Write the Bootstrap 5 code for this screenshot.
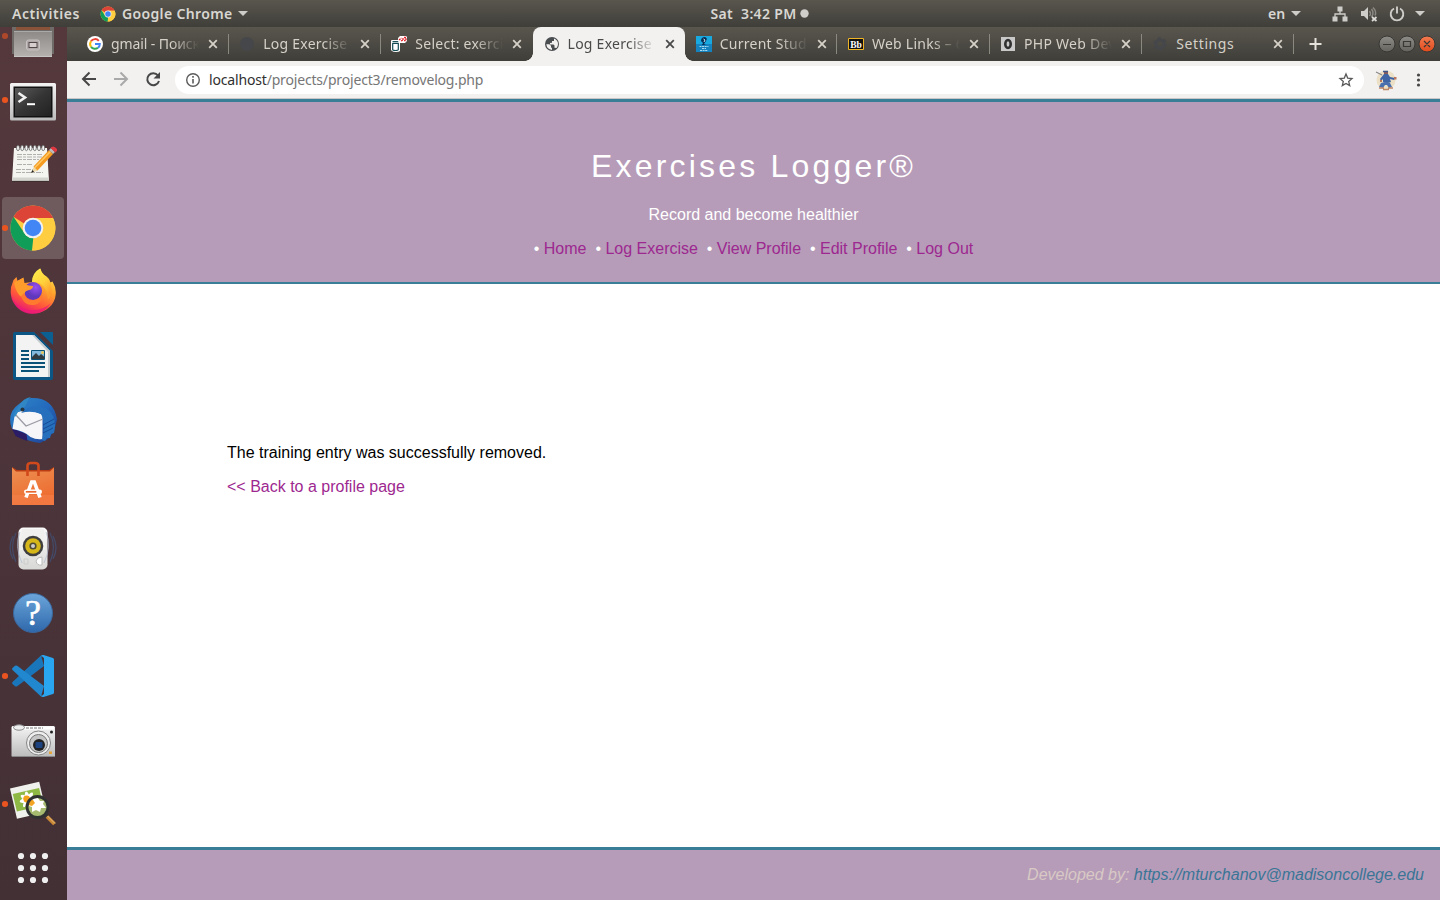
<!DOCTYPE html>
<html lang="en">
<head>
<meta charset="utf-8">
<title>Log Exercise</title>
<link href="https://cdn.jsdelivr.net/npm/bootstrap@5.3.0/dist/css/bootstrap.min.css" rel="stylesheet">
<style>
body{width:1440px;height:900px;overflow:hidden;font-family:"Noto Sans","Open Sans",sans-serif;background:#fff}
svg{display:block;flex:none}
.topbar{height:27px;background:linear-gradient(#59564e,#3f3e39);color:#d9d7d2;font-size:14px;font-weight:600;line-height:27px;white-space:nowrap}
.topbar-side{flex:1 1 0}
.clock{width:98px;margin-left:79px;letter-spacing:.34px;white-space:pre}
.caret{width:0;height:0;border:5px solid transparent;border-top-color:#cfcdc9;border-bottom:0}
.dock{width:67px;background:linear-gradient(#54383c,#4b343a 55%,#423035)}
.dock-list{margin-top:-23px}
.dock-item{height:64px;position:relative}
.dock-item.running::before{content:"";position:absolute;left:2px;top:29px;width:5.5px;height:5.5px;border-radius:50%;background:#e95420}
.dock-item.faded::before{opacity:.6}
.dock-tile{width:62px;height:62px;border-radius:4px;margin-left:-1px}
.dock-item.selected .dock-tile{background:#6f5a5e}
.tabstrip{height:34px;background:linear-gradient(#59564e,#3f3e39);padding-left:9.4px;color:#d6d1c8}
.tab{width:152.2px;padding:0 10.4px 0 10.6px;font-size:14px;letter-spacing:.25px;position:relative}
.tab.sep::after{content:"";position:absolute;right:0;top:7px;height:20px;width:1px;background:#8b8880}
.tab-title{width:88px;overflow:hidden;white-space:nowrap;line-height:34px;height:34px;-webkit-mask-image:linear-gradient(90deg,#000 68%,transparent);mask-image:linear-gradient(90deg,#000 68%,transparent)}
.tab-title.full{-webkit-mask-image:none;mask-image:none}
.tab-title.tight{letter-spacing:-.1px}
.tab-close{margin-left:9px}
.tab.current{background:#f2f1f0;color:#4a4a4a;border-radius:8px 8px 0 0}
.tab.current::before,.tab.current::after{content:"";position:absolute;bottom:0;width:8px;height:8px}
.tab.current::before{left:-8px;background:radial-gradient(circle at 0 0,transparent 7.5px,#f2f1f0 8px)}
.tab.current::after{right:-8px;background:radial-gradient(circle at 100% 0,transparent 7.5px,#f2f1f0 8px)}
.toolbar{height:38px;background:#f2f1f0;border-bottom:1px solid #c9c8c6;padding:0 15px 0 14px}
.omnibox{height:28px;border-radius:14px;background:#fff;width:1189px;font-size:14px;letter-spacing:-.17px;line-height:26px;color:#767676;padding:0 10px}
.omnibox b{font-weight:400;color:#303030}
.site{font-family:"Liberation Sans",Arial,sans-serif;font-size:16px;line-height:18px;color:#000}
.site a{text-decoration:none;color:#9d2890}
.site-head{height:185px;background:#b69cb8;border-top:3px solid #3a7d96;border-bottom:2px solid #3a7d96;color:#fff;padding-top:46px}
.site-head h1{font-size:32px;font-weight:400;letter-spacing:3.2px;line-height:36px;margin:0 0 22px}
.site-nav{gap:8.9px}
.site-nav li{white-space:pre}
.site-main{padding:160px 160px 0}
.site-foot{height:53px;background:#b69cb8;border-top:3px solid #3a7d96;color:#d8c9c5;padding:16px 16px 0}
.site-foot a{color:#3a7596}
</style>
</head>
<body class="d-flex flex-column">
<svg width="0" height="0" class="position-absolute">
<defs>
<symbol id="chrome" viewBox="0 0 48 48"><circle cx="24" cy="24" r="22.5" fill="#fc4"/><path d="M4.5 12.800A22.500 22.500 0 0 1 43.500 12.800L44 14H24a10 10 0 0 0-9 5.500z" fill="#db4437"/><path d="M4.500 12.800 15.300 29a10 10 0 0 0 9 5L23 46.500A22.500 22.500 0 0 1 4.500 12.800z" fill="#0f9d58"/><path d="M44 14H24l9 10v4L23 46.500A22.500 22.500 0 0 0 44 14z" fill="#ffcd40"/><circle cx="24" cy="24" r="10.300" fill="#f1f1f1"/><circle cx="24" cy="24" r="8.300" fill="#4285f4"/></symbol>
<symbol id="close" viewBox="0 0 10 10"><path d="M1.200 1.200 8.800 8.800M8.800 1.200 1.200 8.800" stroke="currentColor" stroke-width="1.800"/></symbol>
<linearGradient id="metal" x2="0" y2="1"><stop stop-color="#8d8986"/><stop offset="1" stop-color="#b5b2af"/></linearGradient>
<linearGradient id="silver" x2="0" y2="1"><stop stop-color="#f4f4f4"/><stop offset="1" stop-color="#bbb"/></linearGradient>
<linearGradient id="white" x2="0" y2="1"><stop stop-color="#fafafa"/><stop offset="1" stop-color="#d8d8d6"/></linearGradient>
<linearGradient id="dark" x2="1" y2="1"><stop stop-color="#5a5a5a"/><stop offset=".5" stop-color="#353535"/><stop offset="1" stop-color="#222"/></linearGradient>
<linearGradient id="fox" x1=".8" x2=".3" y2="1"><stop stop-color="#fff14f"/><stop offset=".4" stop-color="#ffa02c"/><stop offset=".72" stop-color="#ff563b"/><stop offset="1" stop-color="#e8127a"/></linearGradient>
<linearGradient id="flame" x2=".6" y2="1"><stop stop-color="#fff14f"/><stop offset=".6" stop-color="#ffcf3a"/><stop offset="1" stop-color="#ff9a2c"/></linearGradient>
<linearGradient id="bird" x2="1" y2="1"><stop stop-color="#2f86c9"/><stop offset=".5" stop-color="#2369bd"/><stop offset="1" stop-color="#20398a"/></linearGradient>
<linearGradient id="bag" x2=".4" y2="1"><stop stop-color="#ec9052"/><stop offset="1" stop-color="#ee6b30"/></linearGradient>
<linearGradient id="help" x2="0" y2="1"><stop stop-color="#6ba5da"/><stop offset="1" stop-color="#2f68ab"/></linearGradient>
<radialGradient id="violet" cx=".65" cy=".3"><stop stop-color="#9a50f0"/><stop offset="1" stop-color="#6038bd"/></radialGradient>
<linearGradient id="grey" x2="0" y2="1"><stop stop-color="#8f8d87"/><stop offset="1" stop-color="#65635d"/></linearGradient>
<linearGradient id="orange" x2="0" y2="1"><stop stop-color="#f47b50"/><stop offset="1" stop-color="#df4a1c"/></linearGradient>
</defs></svg>

<header class="topbar d-flex">
  <div class="topbar-side d-flex align-items-center">
    <span style="letter-spacing:.55px;margin-left:12px;width:88px">Activities</span>
    <svg width="16" height="16"><use href="#chrome"/></svg>
    <span style="letter-spacing:.35px;margin-left:6px;width:116px">Google Chrome</span><i class="caret"></i>
  </div>
  <div class="clock d-flex align-items-center justify-content-between"><span>Sat  3:42 PM</span><svg width="9" height="9"><circle cx="4.500" cy="4.500" r="4.200" fill="#d0cecb"/></svg></div>
  <div class="topbar-side d-flex align-items-center justify-content-end">
    <span style="width:23px">en</span><i class="caret"></i>
    <svg width="16" height="16" style="margin-left:31px" viewBox="0 0 16 16" fill="#cfcdc9"><path d="M5.500.500h5v5h-5zM.500 10.500h5v5h-5zM10.500 10.500h5v5h-5z"/><path d="M8 5v3M3 11V8h10v3" fill="none" stroke="#cfcdc9" stroke-width="1.300"/></svg>
    <svg width="18" height="16" style="margin-left:12px" viewBox="0 0 18 16"><path d="M1 5h3l4-4v13l-4-4H1z" fill="#cfcdc9"/><path d="M9.500 5q2 2.500 0 5M11.500 3q3 4 0 8M13 1.500q4 4 2 8" fill="none" stroke="#8b8983" stroke-width="1.500"/><path d="M12 11l4.500 4M16.500 11l-4.500 4" stroke="#dedcd8" stroke-width="1.700"/></svg>
    <svg width="16" height="16" style="margin-left:11px" viewBox="0 0 16 16"><path d="M5 2.500a6.300 6.300 0 1 0 6 0M8 .500v7" fill="none" stroke="#cfcdc9" stroke-width="1.900"/></svg>
    <i class="caret" style="margin:0 15px 0 10px"></i>
  </div>
</header>

<div class="d-flex flex-grow-1" style="min-height:0">
<aside class="dock overflow-hidden flex-shrink-0">
<div class="dock-list">
  <div class="dock-item running faded d-flex align-items-center justify-content-center"><div class="dock-tile d-flex align-items-center justify-content-center"><svg width="48" height="48"><path d="M3 0h42v42H3z" fill="#6f6b69"/><path d="M7 14h34v4H7z" fill="#8a5238"/><path d="M5 19h38v26H5z" fill="url(#metal)"/><path d="M5 19.500h38" stroke="#aaa"/><path d="M5 44.500h38" stroke="#c8c6c4"/><rect x="17.500" y="28" width="13" height="10" rx="2" fill="#b1a9a9" stroke="#c8c2c2"/><rect x="20" y="30.500" width="8" height="5" fill="#d7cfcf" stroke="#504749"/></svg></div></div>
  <div class="dock-item running d-flex align-items-center justify-content-center"><div class="dock-tile d-flex align-items-center justify-content-center"><svg width="48" height="48"><rect x="1" y="7" width="46" height="37.500" rx="1.500" fill="url(#silver)"/><rect x="4.500" y="10.500" width="39" height="31" fill="#111"/><path d="M6 12h36v28H6z" fill="url(#dark)"/><path d="M9.500 17l6.500 4.500-6.500 4.500" fill="none" stroke="#f1f1f1" stroke-width="2.600"/><path d="M18 28.200h8" stroke="#fff" stroke-width="2"/></svg></div></div>
  <div class="dock-item d-flex align-items-center justify-content-center"><div class="dock-tile d-flex align-items-center justify-content-center"><svg width="48" height="48"><path d="M5 8h33l2 33H3z" fill="#f4f4f1"/><path d="M3.200 37.500h36.600l.2 3.500H3z" fill="#d4d4cf"/><path d="M3 41.300h37" stroke="#222" opacity=".5"/><g fill="#f4f4f4" stroke="#666" stroke-width=".8"><ellipse cx="9" cy="8" rx="1.500" ry="2.700"/><ellipse cx="13.200" cy="8" rx="1.500" ry="2.700"/><ellipse cx="17.400" cy="8" rx="1.500" ry="2.700"/><ellipse cx="21.600" cy="8" rx="1.500" ry="2.700"/><ellipse cx="25.800" cy="8" rx="1.500" ry="2.700"/><ellipse cx="30" cy="8" rx="1.500" ry="2.700"/><ellipse cx="34.200" cy="8" rx="1.500" ry="2.700"/></g><path d="M8 14.500h26M8 17h28M8 19.500h22M8 24.500h16M7 29.500h20M7 32.500h27" stroke="#b0b0ae" stroke-width="1" stroke-dasharray="5 1 3 1"/><path d="M22 33l3-6.500 4 4z" fill="#eed9a8"/><path d="M22 33l1.400-3 1.600 1.700z" fill="#222"/><path d="M24.500 26.500 40 10l4 4-15.500 16.500z" fill="#f49b20"/><path d="M25.500 28 41.500 11.500" stroke="#ffc763" stroke-width="1.500"/><path d="M40 10l2-2 4 4-2 2z" fill="#bbb"/><path d="M42 8q2-2 4.500 0t0 4z" fill="#e23a44" stroke="#e23a44"/></svg></div></div>
  <div class="dock-item running selected d-flex align-items-center justify-content-center"><div class="dock-tile d-flex align-items-center justify-content-center"><svg width="48" height="48"><use href="#chrome"/></svg></div></div>
  <div class="dock-item d-flex align-items-center justify-content-center"><div class="dock-tile d-flex align-items-center justify-content-center"><svg width="48" height="48"><path d="M3.500 15q1-4 4-6l1 4 6-3.500 1 5.500 8-1q0-9 8-13.500 1 5 6 8 3 2 4 6l2-1q5 8 2.500 17A22.500 20.500 0 0 1 2 27Q1 20 3.500 15z" fill="url(#fox)"/><path d="M2 27q5 13 18 15 14 1 22-7-7 11-18 11Q7 46 2 27z" fill="#ec1a78" opacity=".75"/><path d="M23 14q0-9 8-13.500 1 5 6 8 6 5 5.500 14 0 5-3.500 9-1-12-8-16-4-2-8-1.500z" fill="url(#flame)"/><circle cx="24" cy="23" r="9" fill="url(#violet)"/><path d="M5 15q1-2 3-2l6-3 1 5q3 3 9 3 0 3-4 4-5 1-4.500 5l-3 2q-5-3-7.500-14z" fill="#ff9d2c"/><path d="M15 25q2 8 10 7 6-1 8-6 1 9-8 11-10 1-13-9z" fill="#ff7a2f"/></svg></div></div>
  <div class="dock-item d-flex align-items-center justify-content-center"><div class="dock-tile d-flex align-items-center justify-content-center"><svg width="48" height="48"><path d="M6 0h19l19 19v27q0 2-2 2H6q-2 0-2-2V2q0-2 2-2z" fill="#0b5685"/><path d="M7 3h18l16 16v26H7z" fill="#f3f3f3"/><path d="M25 3l16 16v26h-2V20L23 3z" fill="#c6cbd0"/><path d="M27 0h4l13 12v6z" fill="#4b343a"/><path d="M31 0h12q1 0 1 1v12z" fill="#0b5f91"/><path d="M12 19h8M12 23h8M12 27h8M12 31h24M12 35h24M12 39h18" stroke="#0b5278" stroke-width="2"/><path d="M22.500 18.500h13v9h-13z" fill="#82b9dc" stroke="#0b5278"/><path d="M23 27v-2l4-4 3 3 2-2 3.500 3v2z" fill="#313b40"/><circle cx="33.500" cy="20.500" r="1.500" fill="#eac55b"/></svg></div></div>
  <div class="dock-item d-flex align-items-center justify-content-center"><div class="dock-tile d-flex align-items-center justify-content-center"><svg width="48" height="48"><path d="M3 33Q-3 17 10 8q4-4 12-6 22-1 26 21-2 13-9 20l-8 4Q10 44 3 33z" fill="url(#bird)"/><path d="M2.500 32l4 8q8 4 12 5l-1-7z" fill="#2a1d65"/><path d="M6 17 3.500 33q12 2 18 8 6 3 12 2l0-24Q20 11 6 17z" fill="#f6f6f8"/><path d="M6 18l11 12 17-7" fill="none" stroke="#9a9ba5" stroke-width="1.300"/><path d="M10 10Q14 2 22 1l-3 3q-2 8-10 12l-3 5-2-2z" fill="#3087c4"/><path d="M12 17q10-3 20 1 5 9 1 26l3 1 2-3 3 0 1-4 3-1q4-16-7-24Q24 6 12 17z" fill="#256fbd"/><circle cx="13.500" cy="13.500" r="2" fill="#263541"/><path d="M34 29l11-6M34 33l12-6M34 37l10-5" stroke="#164b96"/></svg></div></div>
  <div class="dock-item d-flex align-items-center justify-content-center"><div class="dock-tile d-flex align-items-center justify-content-center"><svg width="48" height="48"><path d="M3 7l5 3h32l5-3v9H3z" fill="#b93c12"/><path d="M3 7.500l4 4h34l4-4V45H3z" fill="url(#bag)"/><path d="M18.500 16V5.500q0-2 3-2.500h5q3 .5 3 2.500V16" fill="none" stroke="#d24a1c" stroke-width="2.600"/><path d="M3 35h42v10H3z" fill="#f6834f" opacity=".5"/><path d="M17 37.500 22.700 22h2.600L31 37.500" fill="none" stroke="#fff" stroke-width="3.600"/><rect x="15" y="29.500" width="18" height="4.500" rx="2.200" fill="#fff"/><path d="M16.800 31.800h10.500" stroke="#e8662f" stroke-width="1.700"/></svg></div></div>
  <div class="dock-item d-flex align-items-center justify-content-center"><div class="dock-tile d-flex align-items-center justify-content-center"><svg width="48" height="48"><path d="M7 9q-7 14 0 29M4 12q-6 12 0 23M41 9q7 14 0 29M44 12q6 12 0 23" fill="none" stroke="#434966" stroke-width="1.300"/><rect x="9.500" y="3.500" width="29" height="42" rx="5" fill="url(#white)"/><path d="M13 5h22l2 21H11z" fill="#f0f0ef"/><circle cx="24" cy="22" r="10.300" fill="#3f3f3f"/><circle cx="24" cy="22" r="7.800" fill="#d5b719"/><circle cx="24" cy="22" r="3.600" fill="#4f4b35"/><circle cx="24" cy="22" r="2" fill="#ccc"/><path d="M27 37q1-4 6-4v8q-5 1-6-4z" fill="#fff" stroke="#bbb"/><path d="M15 35h4v5h-4z" fill="none" stroke="#ccc"/><path d="M37 8q6 14-2 31M11 8q-6 14 2 31" fill="none" stroke="#aebbd2" opacity=".7"/></svg></div></div>
  <div class="dock-item d-flex align-items-center justify-content-center"><div class="dock-tile d-flex align-items-center justify-content-center"><svg width="48" height="48"><circle cx="24" cy="25" r="19.500" fill="url(#help)" stroke="#3b679c"/><text x="24" y="37" text-anchor="middle" font-family="Liberation Serif" font-size="36" font-weight="400" fill="#fff" stroke="#fff" stroke-width=".6">?</text></svg></div></div>
  <div class="dock-item running d-flex align-items-center justify-content-center"><div class="dock-tile d-flex align-items-center justify-content-center"><svg width="48" height="48"><path d="M32 3.500 3.500 30q-1 1 0 2l2.500 2.200q1 .8 2.200 0L35 14z" fill="#1a76ba"/><path d="M32 44.500 3.500 18q-1-1 0-2L6 13.800q1-.8 2.200 0L35 34z" fill="#2188cf"/><path d="M34.500 3l9.500 3q1 .500 1 1.500v33q0 1-1 1.500l-9.500 3q-1.500.3-3-1.200 2.500.2 3.500-2V6.200q-1-2.200-3.500-2 1.500-1.500 3-1.200z" fill="#2aa5f0"/></svg></div></div>
  <div class="dock-item d-flex align-items-center justify-content-center"><div class="dock-tile d-flex align-items-center justify-content-center"><svg width="48" height="48"><rect x="2.500" y="10" width="43.500" height="31" rx="1.500" fill="url(#silver)"/><path d="M3 12h42" stroke="#fff" stroke-width="3"/><ellipse cx="10" cy="11.500" rx="5.500" ry="2.700" fill="#eee" stroke="#888"/><path d="M17 12h17" stroke="#777" stroke-dasharray="3 1"/><circle cx="29.500" cy="27" r="12" fill="#ededed" stroke="#858585"/><circle cx="29.500" cy="27.500" r="9" fill="#c5c5c5" stroke="#777"/><circle cx="30" cy="29" r="6" fill="#222"/><rect x="26.500" y="26" width="7" height="6" rx="1" fill="#1d4381"/><circle cx="42.500" cy="16" r="1.500" fill="#222"/><path d="M40 35.500h3v2.500h-3z" fill="#e6a53b"/><path d="M3 40.500h43" stroke="#888"/></svg></div></div>
  <div class="dock-item running d-flex align-items-center justify-content-center"><div class="dock-tile d-flex align-items-center justify-content-center"><svg width="48" height="48"><g transform="rotate(-13 18 20)"><path d="M4 5h30v31H4z" fill="#f0f1ec"/><path d="M5.500 11h27v18h-27z" fill="#8fb945"/><g fill="#fff"><ellipse cx="19" cy="20" rx="2.600" ry="8.500"/><ellipse cx="19" cy="20" rx="8.500" ry="2.600"/><ellipse cx="19" cy="20" rx="2.600" ry="8.500" transform="rotate(45 19 20)"/><ellipse cx="19" cy="20" rx="2.600" ry="8.500" transform="rotate(-45 19 20)"/></g><circle cx="18" cy="19" r="3.500" fill="#f5a019"/></g><circle cx="28.500" cy="27" r="10.500" fill="#a6bb70"/><path d="M20 22q4-6 9-4l2 3 4 0-1 3 3 4-5 0-1 4-4-2-4 2 0-5-3-1z" fill="#fff"/><path d="M20 20l4 0 2 3-3 3-4-1z" fill="#f3a422"/><circle cx="28.500" cy="27" r="10.500" fill="none" stroke="#303232" stroke-width="2.800"/><path d="M36 34.500l3 3" stroke="#333" stroke-width="4"/><path d="M38 36.500l7.500 7.500" stroke="#c98733" stroke-width="3.800"/><path d="M38.500 36l7.500 7.500" stroke="#e5bd80"/></svg></div></div>
  <div class="dock-item d-flex align-items-center justify-content-center"><div class="dock-tile d-flex align-items-center justify-content-center"><svg width="48" height="48" fill="#efefef"><circle cx="12" cy="12" r="3.100"/><circle cx="24" cy="12" r="3.100"/><circle cx="36" cy="12" r="3.100"/><circle cx="12" cy="24" r="3.100"/><circle cx="24" cy="24" r="3.100"/><circle cx="36" cy="24" r="3.100"/><circle cx="12" cy="36" r="3.100"/><circle cx="24" cy="36" r="3.100"/><circle cx="36" cy="36" r="3.100"/></svg></div></div>
</div>
</aside>

<div class="d-flex flex-column flex-grow-1" style="min-width:0">
<div class="tabstrip d-flex flex-shrink-0">
  <div class="tab sep d-flex align-items-center flex-shrink-0"><svg width="16" height="16" viewBox="0 0 16 16"><circle cx="8" cy="8" r="8" fill="#fff"/><g fill="none" stroke-width="2"><path d="M11.800 4.800A5 5 0 0 0 4 5.200" stroke="#ea4335"/><path d="M4 5.200a5 5 0 0 0 0 5.600" stroke="#fbbc05"/><path d="M4 10.800a5 5 0 0 0 7 1" stroke="#34a853"/><path d="M8 8h4.800q0 2.400-1.800 3.800" stroke="#4285f4"/></g></svg><span class="tab-title tight ms-2">gmail - Поиск</span><svg width="10" height="10" class="tab-close"><use href="#close"/></svg></div>
  <div class="tab sep d-flex align-items-center flex-shrink-0"><svg width="16" height="16"><circle cx="8" cy="8" r="7" fill="#45474a"/></svg><span class="tab-title ms-2">Log Exercise</span><svg width="10" height="10" class="tab-close"><use href="#close"/></svg></div>
  <div class="tab d-flex align-items-center flex-shrink-0"><svg width="16" height="16" viewBox="0 0 16 16"><path d="M1 4h7q1 0 1 1v10q-1 1-4 1t-4-1-1-1V5q0-1 1-1z" fill="#fff"/><path d="M1.700 7.500v6q0 1 2.800 1t2.800-1v-6z" fill="#fff" stroke="#134b53" stroke-width="1.200"/><path d="M1.500 5.700h6" stroke="#134b53" stroke-width="1.300"/><path d="M7 2l2-2h6l1 1v4l-2 2H9L7 5z" fill="#fff"/><path d="M8 4l2.500-2M10 5l2-1M13 1.500h2v3h-2M12 2v2" fill="none" stroke="#e02029" stroke-width="1.300" stroke-dasharray="2 .7"/></svg><span class="tab-title ms-2">Select: exerci</span><svg width="10" height="10" class="tab-close"><use href="#close"/></svg></div>
  <div class="tab current d-flex align-items-center flex-shrink-0"><svg width="16" height="16"><circle cx="8" cy="8" r="7" fill="#4a4d50"/><path d="M2.300 8.300h3l1.700 1.500v1.400l1 1v1.700Q3 13.500 2.300 8.300zM10 2.500q4 1.500 4 5.500 0 2.500-1.500 4l-2-.3V9.500l-1-1H6V7l2-.3V5h2z" fill="#f2f1f0"/></svg><span class="tab-title ms-2">Log Exercise</span><svg width="10" height="10" class="tab-close"><use href="#close"/></svg></div>
  <div class="tab sep d-flex align-items-center flex-shrink-0"><svg width="16" height="16"><path d="M0 0h16v16H0z" fill="#19a9e1"/><path d="M0 8h16v8H0z" fill="#1583bf"/><path d="M5 5q0-4 4-4 3 1 1 4L8 8l2 1H6l1-2z" fill="#092f55"/><path d="M7.500 3l1.500 1-1 2" fill="none" stroke="#c9e8f6"/><path d="M3.500 10.500h9M6 12.500h4M4 14.500h8" stroke="#a9daf0" stroke-dasharray="2 .6"/></svg><span class="tab-title ms-2">Current Stud</span><svg width="10" height="10" class="tab-close"><use href="#close"/></svg></div>
  <div class="tab sep d-flex align-items-center flex-shrink-0"><svg width="16" height="16"><path d="M.500 2.500h15v11H.500z" fill="#111" stroke="#eeb527"/><text x="8" y="11.500" text-anchor="middle" font-family="Liberation Serif" font-size="9.500" font-weight="700" letter-spacing="0" fill="#fff">Bb</text></svg><span class="tab-title ms-2">Web Links – 6</span><svg width="10" height="10" class="tab-close"><use href="#close"/></svg></div>
  <div class="tab sep d-flex align-items-center flex-shrink-0"><svg width="16" height="16"><path d="M1 1h14v14H1z" fill="#c9c9c9"/><ellipse cx="8" cy="8" rx="2.700" ry="4" fill="none" stroke="#303030" stroke-width="2.600"/></svg><span class="tab-title ms-2">PHP Web Dev</span><svg width="10" height="10" class="tab-close"><use href="#close"/></svg></div>
  <div class="tab sep d-flex align-items-center flex-shrink-0"><svg width="16" height="16"><circle cx="8" cy="8" r="4" fill="none" stroke="#45474a" stroke-width="3"/><circle cx="8" cy="8" r="5.800" fill="none" stroke="#45474a" stroke-width="2" stroke-dasharray="3 3.070"/></svg><span class="tab-title full ms-2" style="letter-spacing:.6px">Settings</span><svg width="10" height="10" class="tab-close"><use href="#close"/></svg></div>
  <svg width="13" height="34" style="margin-left:15.500px"><path d="M6.500 11v12M.500 17h12" stroke="#e5e2dc" stroke-width="2"/></svg>
  <svg width="58" height="34" class="ms-auto" style="margin-right:4px"><g stroke="#383733"><circle cx="9" cy="17" r="8" fill="url(#grey)"/><circle cx="29" cy="17" r="8" fill="url(#grey)"/><circle cx="49" cy="17" r="8" fill="url(#orange)"/></g><path d="M5 17.500h8M25.500 14.500h7v5h-7zM46 14l6 6M52 14l-6 6" fill="none" stroke="#393833" stroke-width="1.200"/></svg>
</div>
<div class="toolbar d-flex align-items-center flex-shrink-0">
  <svg width="94" height="20"><g fill="none" stroke-width="2"><path d="M15 9H2M8.500 2.500 2 9l6.500 6.500" stroke="#474747"/><path d="M33 9h13M39.500 2.500 46 9l-6.500 6.500" stroke="#a9a9a9"/><path d="M77 5.500A6 6 0 1 0 78 11" stroke="#474747"/></g><path d="M79 2v6.500h-6.500z" fill="#474747"/></svg>
  <div class="omnibox d-flex align-items-center"><svg width="16" height="16"><circle cx="8" cy="8" r="6.300" fill="none" stroke="#5c5c5c" stroke-width="1.400"/><path d="M8 7v4.500M8 4v1.700" stroke="#5c5c5c" stroke-width="1.600"/></svg><span style="margin-left:8px"><b>localhost</b>/projects/project3/removelog.php</span>
    <svg width="16" height="16" class="ms-auto"><path d="M8 2l1.700 4.100 4.300.4-3.300 2.900 1 4.200L8 11.400l-3.700 2.200 1-4.200L2 6.500l4.300-.4z" fill="none" stroke="#595959" stroke-width="1.300"/></svg></div>
  <svg width="22" height="22" style="margin-left:11px"><circle cx="11" cy="11" r="9.500" fill="#ebe0c6"/><path d="M9 5h4l2 3 5 1-1 2-4-1 1 3q-4 2-8 0l0-3-2 2-1-2z" fill="#4065a5"/><path d="M6 14l4-1 5 1 2 4-3 1-2-3h-2l-2 3-4-1z" fill="#4c6fae"/><path d="M9 2.500h4v2.500H9z" fill="#8b5c5c"/><path d="M8 2.500h5" stroke="#3b5687" stroke-width="1.500"/><path d="M19 8h2.500v2.500H19zM5 11h2v2H5z" fill="#b8775c"/><path d="M4 19h5M13 19h5M8 20.500h6" stroke="#c08767" stroke-width="1.500"/><path d="M1 3l6 3" stroke="#888" stroke-width="1.200"/></svg>
  <svg width="5" height="16" class="ms-auto" style="margin-right:4px" fill="#474747"><circle cx="2.500" cy="3" r="1.600"/><circle cx="2.500" cy="8" r="1.600"/><circle cx="2.500" cy="13" r="1.600"/></svg>
</div>

<div class="site d-flex flex-column flex-grow-1">
  <header class="site-head text-center">
    <h1>Exercises Logger®</h1>
    <p class="mb-3">Record and become healthier</p>
    <ul class="site-nav list-unstyled d-flex justify-content-center mb-0"><li>• <a href="#">Home</a></li><li>• <a href="#">Log Exercise</a></li><li>• <a href="#">View Profile</a></li><li>• <a href="#">Edit Profile</a></li><li>• <a href="#">Log Out</a></li></ul>
  </header>
  <main class="site-main flex-grow-1">
    <p class="mb-3">The training entry was successfully removed.</p>
    <a href="#">&lt;&lt; Back to a profile page</a>
  </main>
  <footer class="site-foot text-end fst-italic">Developed by: <a href="#">https://mturchanov@madisoncollege.edu</a></footer>
</div>
</div>
</div>
<script src="https://cdn.jsdelivr.net/npm/bootstrap@5.3.0/dist/js/bootstrap.bundle.min.js"></script>
</body>
</html>
